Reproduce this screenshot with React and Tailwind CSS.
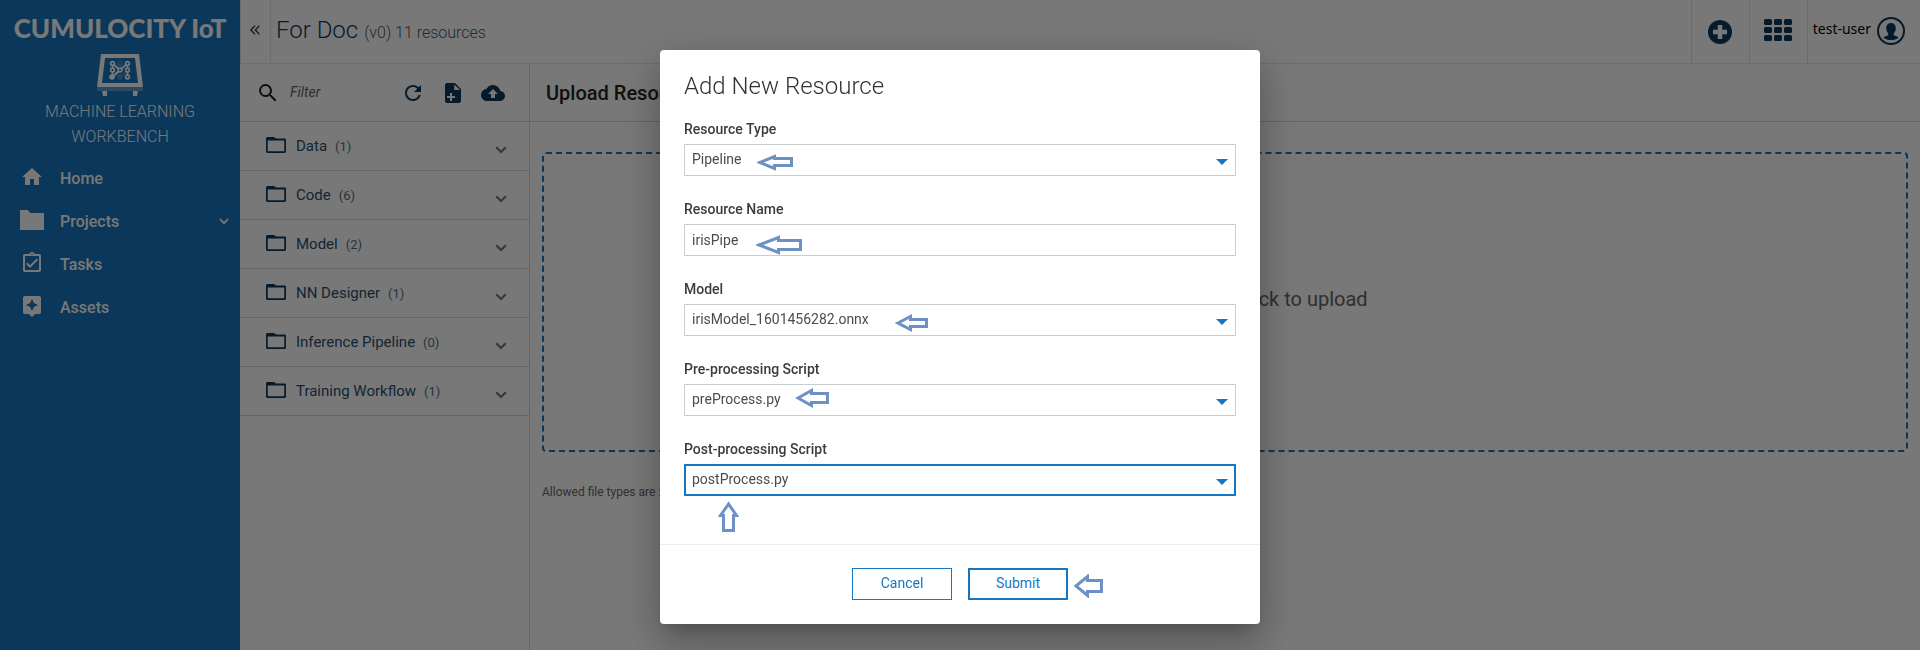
import { MdHome, MdOutlineAssignmentTurnedIn, MdAssistant, MdRefresh, MdCloudUpload, MdSearch } from "react-icons/md";

const folders = [
  ["Data", 1],
  ["Code", 6],
  ["Model", 2],
  ["NN Designer", 1],
  ["Inference Pipeline", 0],
  ["Training Workflow", 1],
];

function Chevron({ className }) {
  return (
    <svg viewBox="0 0 12 8" className={className} fill="none" stroke="currentColor" strokeWidth="2.2">
      <path d="M1.2 1.2 6 6l4.800-4.800" />
    </svg>
  );
}

function WorkbenchLogo() {
  const dots = [[15.5, 9.5], [30.5, 9.5], [15.5, 16], [23, 16], [30.5, 16], [30.5, 23]];
  return (
    <svg viewBox="0 0 46 42" className="h-[42px] w-[46px]">
      <path d="M5 36h5v6H6zM36 36h5l-1 6h-4z" fill="#fff" />
      <path d="M0 33h46v4H0z" fill="#5f9bd0" />
      <path fillRule="evenodd" d="M4 0h38l4 33H0zM8 4 5 29h36L38 4z" fill="#fff" />
      <g fill="none" stroke="#5f9bd0" strokeWidth="1.2">
        <path d="M15.500 16 23 23l7.500-7" />
        <circle cx="23" cy="9.5" r="2" />
        <circle cx="23" cy="23" r="2" />
      </g>
      <path d="M15.500 23V9.500L23 16l7.500-6.500V23M15.500 23 23 16" fill="none" stroke="#fff" strokeWidth="1.8" />
      {dots.map(([x, y]) => (
        <circle key={x + "-" + y} cx={x} cy={y} r="1.9" fill="#1776bf" stroke="#fff" strokeWidth="1.6" />
      ))}
      <circle cx="15" cy="23" r="2.8" fill="#fff" />
    </svg>
  );
}

function FolderSolid() {
  return (
    <svg viewBox="0 0 24 20" className="h-5 w-6" fill="currentColor">
      <path d="M0 0h7.500l3 3H24v17H0z" />
    </svg>
  );
}

function FolderOutline() {
  return (
    <svg viewBox="0 0 20 16" className="h-4 w-5 text-[#0b385b]">
      <path fill="currentColor" fillRule="evenodd" d="M1 0h7l2 1.500h9.200l.8.800V15l-1 1H1l-1-1V1zM1.700 3.400v10.900h16.600V3.400z" />
    </svg>
  );
}

function FilePlus() {
  return (
    <svg viewBox="0 0 16 20" className="h-5 w-4" fill="currentColor">
      <path fillRule="evenodd" d="M1.500 0H10l6 6v12.500l-1.500 1.500h-13L0 18.500v-17zM9.300 1.500V7H15zM5 10v3H2v2h3v3h2v-3h3v-2H7v-3z" />
    </svg>
  );
}

function Arrow({ w, h, head, top, bottom, className }) {
  const m = h / 2;
  return (
    <svg
      width={w}
      height={h}
      viewBox={`0 0 ${w} ${h}`}
      className={"pointer-events-none absolute " + className}
      fill="none"
      stroke="#6c91c2"
      strokeWidth="3"
      aria-hidden="true"
    >
      <path d={`M3 ${m}L${head - 1.5} 2.5V${top + 1.5}H${w - 1.5}V${bottom - 1.5}H${head - 1.5}V${h - 2.5}Z`} />
    </svg>
  );
}

function UpArrow({ className }) {
  return (
    <svg viewBox="0 0 21 31" className={"pointer-events-none absolute h-[31px] w-[21px] " + className} fill="none" stroke="#6c91c2" strokeWidth="3" aria-hidden="true">
      <path d="M10.500 3 2.500 14.500h3v15h10v-15h3z" />
    </svg>
  );
}

function Field({ id, label, value, text, focused, children }) {
  const box =
    "block h-8 w-full appearance-none rounded-none bg-white text-sm text-[#4c4c4c] outline-none " +
    (focused ? "border-2 border-[#1776bf] px-1.5" : "border border-[#c9cdd1] px-[7px]");
  return (
    <div className="flex flex-col gap-1.5">
      <label htmlFor={id} className="text-sm leading-[18px] font-medium text-[#3c3c3c]">{label}</label>
      <div className="relative">
        {text ? (
          <input id={id} type="text" defaultValue={value} className={box} />
        ) : (
          <>
            <select id={id} defaultValue={value} className={box + " pb-0.5"}>
              <option>{value}</option>
            </select>
            <svg viewBox="0 0 12 6" className="pointer-events-none absolute top-[15px] right-2 h-1.5 w-3" fill="#1776bf">
              <path d="M0 0h12L6 6z" />
            </svg>
          </>
        )}
        {children}
      </div>
    </div>
  );
}

function Sidebar() {
  const item = "flex h-[43px] items-center pl-5 pr-[11px] text-base font-medium";
  const icon = "flex w-10 pb-1";
  return (
    <aside className="w-60 shrink-0 bg-[#1776bf] text-white">
      <div className="flex flex-col items-center pt-3">
        <div className="font-[Lato,sans-serif] text-[26px] leading-8 font-black whitespace-nowrap">CUMULOCITY IoT</div>
        <div className="mt-2.5">
          <WorkbenchLogo />
        </div>
        <div className="mt-[3px] w-40 text-center text-base leading-[25px] font-light">MACHINE LEARNING WORKBENCH</div>
      </div>
      <nav className="mt-2">
        <a href="#home" className={item}>
          <span className={icon}><MdHome className="size-6" /></span>Home
        </a>
        <a href="#projects" className={item}>
          <span className={icon}><FolderSolid /></span>
          <span className="flex-1">Projects</span>
          <Chevron className="h-[7px] w-2.5" />
        </a>
        <a href="#tasks" className={item}>
          <span className={icon}><MdOutlineAssignmentTurnedIn className="size-6" /></span>Tasks
        </a>
        <a href="#assets" className={item}>
          <span className={icon}><MdAssistant className="size-6" /></span>Assets
        </a>
      </nav>
    </aside>
  );
}

function Header() {
  const cell = "flex w-[58px] items-center justify-center border-l border-[#e6e6e6]";
  return (
    <header className="flex h-16 border-b border-[#e6e6e6] text-[#0b385b]">
      <button type="button" aria-label="Collapse" className="flex w-[31px] items-center justify-center border-x border-[#e6e6e6] pr-px pb-1">
        <svg viewBox="0 0 10 10" className="h-2.5 w-2.5" fill="none" stroke="currentColor" strokeWidth="1.3">
          <path d="M5 .6.900 5 5 9.400M9.400.6 5.300 5l4.100 4.400" />
        </svg>
      </button>
      <h1 className="flex flex-1 items-baseline gap-1.5 pt-3 pl-[5px] font-light">
        <span className="text-2xl leading-9">For Doc</span>
        <span className="text-base text-[#3c5a75]">(v0) 11 resources</span>
      </h1>
      <button type="button" aria-label="Add" className={cell}>
        <svg viewBox="0 0 24 24" className="size-6">
          <circle cx="12" cy="12" r="12" fill="currentColor" />
          <path d="M12 5v14M5 12h14" stroke="#fff" strokeWidth="4.500" />
        </svg>
      </button>
      <button type="button" aria-label="Applications" className={cell + " pb-1"}>
        <svg viewBox="0 0 28 22" className="h-[22px] w-7" fill="currentColor">
          {[0, 8, 16].map((y) => [0, 10, 20].map((x) => <rect key={x + "-" + y} x={x} y={y} width="8" height="6" rx="1.5" />))}
        </svg>
      </button>
      <button type="button" className="flex items-center gap-1.5 border-l border-[#e6e6e6] pr-[15px] pb-0.5 pl-[5px] text-black">
        <span className="pb-1 font-['Noto_Sans',sans-serif] text-sm">test-user</span>
        <svg viewBox="0 0 28 28" className="size-7 text-[#0b385b]">
          <circle cx="14" cy="14" r="13" fill="none" stroke="currentColor" strokeWidth="2" />
          <path fill="currentColor" d="M14 6c3 0 4.800 2 4.800 5 0 2.400-1 4.200-2 5.300v2c1.500.8 3.700 1 4.700 2.200C19.500 22.400 17 23 14 23s-5.500-.6-7.500-2.500c1-1.200 3.200-1.400 4.700-2.200v-2c-1-1.100-2-2.900-2-5.300 0-3 1.800-5 4.800-5z" />
        </svg>
      </button>
    </header>
  );
}

function ResourceList() {
  return (
    <section className="w-[290px] shrink-0 border-r border-[#d6d6d6]">
      <div className="flex h-[58px] items-center border-b border-[#d6d6d6] pr-6 pl-4">
        <MdSearch className="size-6 text-[#222]" />
        <input type="search" aria-label="Filter" placeholder="Filter" className="ml-[10px] w-0 flex-1 pb-0.5 text-sm italic outline-none placeholder:text-[#666]" />
        <div className="flex items-center gap-5 text-[#0b385b]">
          <button type="button" aria-label="Refresh"><MdRefresh className="size-6" /></button>
          <button type="button" aria-label="New file"><FilePlus /></button>
          <button type="button" aria-label="Upload"><MdCloudUpload className="size-6" /></button>
        </div>
      </div>
      <ul>
        {folders.map(([name, count]) => (
          <li key={name} className="border-b border-[#d6d6d6]">
            <button type="button" className="flex h-12 w-full items-center pr-[22px] pl-[26px] text-left">
              <span className="pb-0.5"><FolderOutline /></span>
              <span className="ml-2.5 flex flex-1 items-baseline gap-2 text-[#2a4f70]">
                <span className="text-[15px]">{name}</span>
                <span className="text-[13px] text-[#55708a]">({count})</span>
              </span>
              <Chevron className="mt-2 h-2 w-3 text-[#777]" />
            </button>
          </li>
        ))}
      </ul>
    </section>
  );
}

function Dialog() {
  const btn = "h-8 w-[100px] bg-white pb-0.5 text-sm text-[#1776bf]";
  return (
    <div className="fixed inset-0 flex items-start justify-center overflow-auto bg-black/53 pt-[50px]">
      <form
        role="dialog"
        aria-labelledby="dialog-title"
        onSubmit={(e) => e.preventDefault()}
        className="w-[600px] rounded bg-white shadow-[0_11px_15px_-7px_rgba(0,0,0,0.2),0_24px_38px_3px_rgba(0,0,0,0.14),0_9px_46px_8px_rgba(0,0,0,0.12)]"
      >
        <div className="px-6 pt-5 pb-12">
          <h2 id="dialog-title" className="text-2xl leading-8 font-light text-[#333]">Add New Resource</h2>
          <div className="mt-[18px] flex flex-col gap-6">
            <Field id="type" label="Resource Type" value="Pipeline">
              <Arrow w={36} h={17} head={19} top={3} bottom={13} className="top-2.5 left-[73px]" />
            </Field>
            <Field id="name" label="Resource Name" value="irisPipe" text>
              <Arrow w={46} h={20} head={24} top={4} bottom={16} className="top-[11px] left-[72px]" />
            </Field>
            <Field id="model" label="Model" value="irisModel_1601456282.onnx">
              <Arrow w={33} h={18} head={17} top={4} bottom={14} className="top-2.5 left-[211px]" />
            </Field>
            <Field id="pre" label="Pre-processing Script" value="preProcess.py">
              <Arrow w={34} h={20} head={18} top={4} bottom={16} className="top-1 left-[111px]" />
            </Field>
            <Field id="post" label="Post-processing Script" value="postProcess.py" focused>
              <UpArrow className="top-[37px] left-[34px]" />
            </Field>
          </div>
        </div>
        <div className="flex justify-center gap-4 border-t border-[#eee] pt-[23px] pb-6">
          <button type="button" className={btn + " border border-[#1776bf]"}>Cancel</button>
          <div className="relative">
            <button type="submit" className={btn + " border-2 border-[#1776bf]"}>Submit</button>
            <Arrow w={30} h={24} head={16} top={5} bottom={19} className="top-1.5 left-[105px]" />
          </div>
        </div>
      </form>
    </div>
  );
}

export default function App() {
  return (
    <div className="flex min-h-screen bg-white font-[Roboto,sans-serif]">
      <Sidebar />
      <div className="flex min-w-0 flex-1 flex-col">
        <Header />
        <div className="flex flex-1">
          <ResourceList />
          <main className="min-w-0 flex-1">
            <h2 className="flex h-[58px] items-center border-b border-[#d6d6d6] px-4 text-xl font-medium text-[#222]">Upload Resources</h2>
            <div className="px-3 pt-[30px]">
              <button type="button" className="flex h-[300px] w-full items-center justify-center rounded border-2 border-dashed border-[#1776bf] pb-1.5 text-xl text-[#666]">
                Drop files here or click to upload
              </button>
              <p className="mt-[30px] text-xs leading-5 text-[#666]">Allowed file types are : .py, .ipynb, .onnx, .csv, .zip</p>
            </div>
          </main>
        </div>
      </div>
      <Dialog />
    </div>
  );
}
